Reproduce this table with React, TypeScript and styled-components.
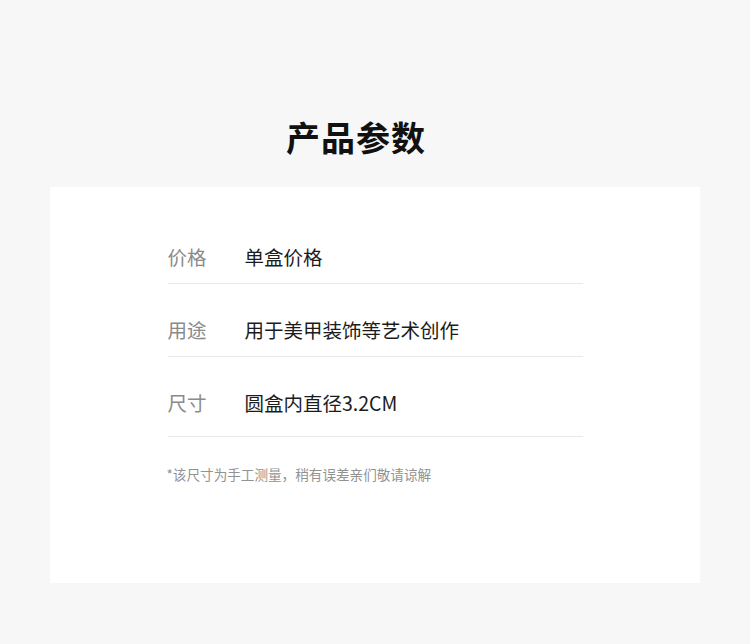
import React from 'react';
import styled, { createGlobalStyle } from 'styled-components';

type Param = {
  label: string;
  value: string;
};

const params: Param[] = [
  { label: '价格', value: '单盒价格' },
  { label: '用途', value: '用于美甲装饰等艺术创作' },
  { label: '尺寸', value: '圆盒内直径3.2CM' },
];

const GlobalStyle = createGlobalStyle`
  html, body {
    margin: 0;
    padding: 0;
    background: #f7f7f7;
  }
  body {
    font-family: "Noto Sans CJK SC", "Noto Sans", sans-serif;
  }
`;

const App: React.FC = () => {
  return (
    <Page>
      <GlobalStyle />
      <Title>产品参数</Title>
      <Card>
        <Content>
          {params.map((p, i) => (
            <Row key={p.label} $extra={i === params.length - 1 ? 7 : 0}>
              <Label>{p.label}</Label>
              <Value>{p.value}</Value>
            </Row>
          ))}
          <Note>*该尺寸为手工测量，稍有误差亲们敬请谅解</Note>
        </Content>
      </Card>
    </Page>
  );
};

const Page = styled.div`
  width: 750px;
  height: 644px;
  padding-top: 117px;
  box-sizing: border-box;
  display: flex;
  flex-direction: column;
  align-items: center;
`;

// the heading sits a little left of the card's centre
const Title = styled.h1`
  margin: 0 38px 0 0;
  font-size: 34px;
  line-height: 40px;
  font-weight: 700;
  color: #111;
  letter-spacing: 1px;
`;

const Card = styled.div`
  margin-top: 30px;
  width: 650px;
  height: 396px;
  background: #fff;
  padding-top: 24px;
  box-sizing: border-box;
  display: flex;
  justify-content: center;
`;

const Content = styled.div`
  width: 415px;
  display: flex;
  flex-direction: column;
`;

const Row = styled.div<{ $extra: number }>`
  display: flex;
  align-items: center;
  padding: 36px 0 ${(p) => 16 + p.$extra}px;
  border-bottom: 1px solid #e8e8e8;
  font-size: 19.5px;
  line-height: 20px;
`;

const Label = styled.span`
  width: 77px;
  flex-shrink: 0;
  color: #8a8a8a;
`;

const Value = styled.span`
  color: #1c1c1c;
`;

const Note = styled.p`
  margin: 28px 0 0 -1px;
  font-size: 13.6px;
  line-height: 18px;
  color: #929292;
`;

export default App;
